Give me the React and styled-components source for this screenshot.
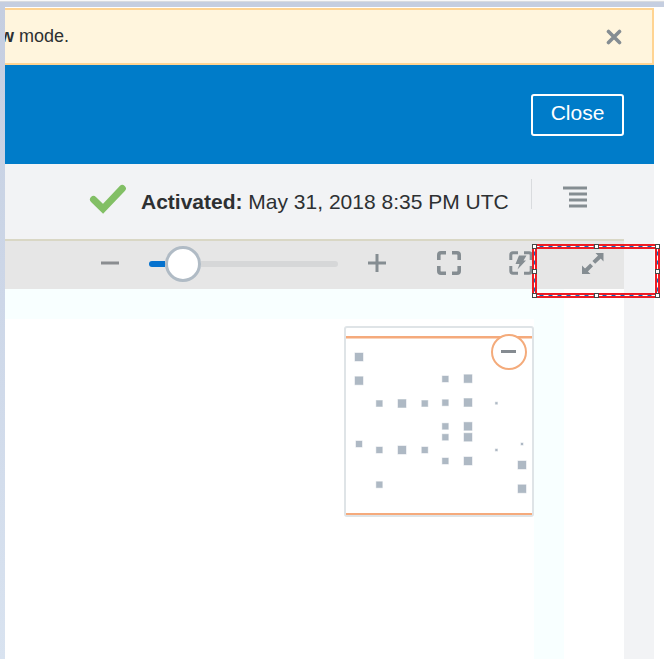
import React from "react";
import styled, { createGlobalStyle } from "styled-components";

const GlobalStyle = createGlobalStyle`
  * { box-sizing: border-box; }
  body {
    margin: 0;
    overflow: hidden;
    background: #fff;
    color: #2d3032;
    font-family: "Liberation Sans", Arial, sans-serif;
  }
`;

const Window = styled.div`
  position: relative;
  display: flex;
  flex-direction: column;
  width: 664px;
  height: 659px;
  overflow: hidden;
`;

const WindowTop = styled.div`
  flex: none;
  height: 7px;
  border-top: 1px solid #f8f8f8;
  background: linear-gradient(#d8dbe0 1px, #c5cee0 1px);
`;

const WindowBody = styled.div`
  display: flex;
  flex: 1;
  min-height: 0;
`;

const WindowEdge = styled.div`
  flex: none;
  width: 5px;
  background: linear-gradient(#c5cee0, #cdd7e8 45%, #d9e3f0);
`;

const Page = styled.main`
  display: flex;
  flex-direction: column;
  width: 649px;
  padding-top: 1px;
  background: #f2f3f5;
  box-shadow: inset 0 1px #fff;
`;

const Notice = styled.div`
  display: flex;
  justify-content: space-between;
  flex: none;
  height: 57px;
  padding: 16px 30px 0 0;
  border: 2px solid #ffd493;
  border-left: 0;
  background: #fff5dd;
  overflow: hidden;
`;

const NoticeText = styled.p`
  margin: 0 0 0 -5px;
  font-size: 18px;
  line-height: 20px;
  white-space: nowrap;
`;

const DismissButton = styled.button`
  display: flex;
  width: 16px;
  height: 16px;
  margin-top: 3px;
  padding: 0;
  border: 0;
  background: none;
`;

const Header = styled.header`
  display: flex;
  justify-content: flex-end;
  flex: none;
  height: 99px;
  padding: 29px 30px 0;
  background: #007cc9;
`;

const CloseButton = styled.button`
  width: 93px;
  height: 42px;
  padding: 0 0 4px;
  border: 2px solid #fff;
  border-radius: 3px;
  background: transparent;
  color: #fff;
  font: 21px/34px "Liberation Sans", Arial, sans-serif;
`;

const StatusBar = styled.section`
  display: flex;
  flex: none;
  height: 75px;
  padding-left: 84px;
`;

const Check = styled.svg`
  flex: none;
  width: 38px;
  height: 32px;
  margin-top: 19px;
`;

const StatusText = styled.p`
  width: 390px;
  margin: 26px 0 0 14px;
  font-size: 21px;
  line-height: 24px;
  white-space: nowrap;
`;

const MenuArea = styled.div`
  height: 30px;
  margin-top: 15px;
  padding: 7px 0 0 31px;
  border-left: 1px solid #d9dbde;
`;

const Toolbar = styled.nav`
  display: flex;
  flex: none;
  width: 619px;
  height: 50px;
  padding-left: 96px;
  border-top: 2px solid #d9d7c5;
  background: #e6e6e6;
`;

const Tool = styled.button`
  display: flex;
  flex: none;
  width: ${(p) => p.$size}px;
  height: ${(p) => p.$size}px;
  margin: ${(p) => p.$top}px 0 0 ${(p) => p.$gap || 0}px;
  padding: 0;
  border: 0;
  background: none;
`;

const Slider = styled.div`
  display: flex;
  align-items: center;
  flex: none;
  width: 189px;
  height: 36px;
  margin: 5px 0 0 30px;
`;

const SliderTrack = styled.div`
  width: ${(p) => (p.$filled ? "16px" : "137px")};
  height: 6px;
  border-radius: ${(p) => (p.$filled ? "3px 0 0 3px" : "0 3px 3px 0")};
  background: ${(p) => (p.$filled ? "#0572ce" : "#d6d7d8")};
`;

const SliderThumb = styled.div`
  width: 36px;
  height: 36px;
  border: 3px solid #b0bbc5;
  border-radius: 50%;
  background: #fff;
`;

const Canvas = styled.section`
  flex: 1;
  width: 619px;
  padding: 37px 0 0 339px;
  background:
    linear-gradient(#f8ffff, #f8ffff) 529px 0 / 30px 100% no-repeat,
    linear-gradient(#f8ffff, #f8ffff) 0 0 / 559px 30px no-repeat,
    #fff;
`;

const MiniMap = styled.div`
  position: relative;
  width: 190px;
  height: 191px;
  border: 2px solid #dfe4e7;
  border-radius: 3px;
  background: #fff;
`;

const MapDrawing = styled.svg`
  display: block;
  width: 186px;
  height: 187px;
`;

const CollapseButton = styled.button`
  position: absolute;
  top: 6px;
  right: 5px;
  display: grid;
  place-items: center;
  width: 36px;
  height: 36px;
  padding: 0 1px 1px 0;
  border: 2px solid #f4ab7b;
  border-radius: 50%;
  background: #fff;
`;

const MinusMark = styled.span`
  width: 15px;
  height: 3px;
  background: #858b91;
`;

const Highlight = styled.svg`
  position: absolute;
  left: 532px;
  top: 244px;
  width: 128px;
  height: 54px;
  pointer-events: none;
`;

/* Each node is its left, top and size inside the overview. */
const nodes = [
  [9, 25, 8], [9, 48.7, 8], [30.3, 72.5, 6], [52, 71.5, 8], [75.8, 72.5, 6],
  [96.3, 48, 6], [118, 46.7, 8], [96.3, 71.7, 6], [118, 70.5, 8], [149.4, 74.2, 2],
  [96.3, 95.3, 6], [118, 94.3, 8], [96.3, 106.2, 6], [118, 105.2, 8],
  [10, 113, 6], [30.3, 119, 6], [52, 118, 8], [75.8, 119, 6], [149.4, 121, 2],
  [175, 115, 2], [96.3, 130, 6], [118, 129, 8], [172, 133, 8], [30.3, 153.7, 6],
  [172, 156.8, 8],
];

const handles = [
  [0, 0], [62, 0], [123, 0], [0, 25], [123, 25], [0, 49], [62, 49], [123, 49],
];

const CORNERS = "M1.8 9V4Q1.8 1.8 4 1.8H9M15 1.8H20Q22.2 1.8 22.2 4V9M22.2 15V20Q22.2 22.2 20 22.2H15M9 22.2H4Q1.8 22.2 1.8 20V15";

function CornerFrame({ width = 3 }) {
  return <path d={CORNERS} fill="none" stroke="#858d92" strokeWidth={width} />;
}

function Overview() {
  return (
    <MiniMap>
      <MapDrawing viewBox="0 0 186 187">
        <path d="M0 9H186M0 186H186" stroke="#f5aa7c" strokeWidth="2" />
        <path d="M0 10.5H186" stroke="#f9d4bd" />
        {nodes.map(([x, y, s]) => (
          <rect key={`${x}-${y}`} x={x} y={y} width={s} height={s}
            fill="#aeb9c4" stroke="#aeb9c4" strokeOpacity=".45" strokeWidth="1" />
        ))}
      </MapDrawing>
      <CollapseButton aria-label="Collapse overview"><MinusMark /></CollapseButton>
    </MiniMap>
  );
}

export default function App() {
  return (
    <>
      <GlobalStyle />
      <Window>
        <WindowTop />
        <WindowBody>
          <WindowEdge />
          <Page>
            <Notice>
              <NoticeText><b>w</b> mode.</NoticeText>
              <DismissButton aria-label="Dismiss">
                <svg width="16" height="16" viewBox="0 0 16 16">
                  <path d="M2.5 2.5L13.5 13.5M13.5 2.5L2.5 13.5" stroke="#858d92" strokeWidth="3.6" strokeLinecap="round" />
                </svg>
              </DismissButton>
            </Notice>
            <Header><CloseButton>Close</CloseButton></Header>
            <StatusBar>
              <Check viewBox="0 0 38 32">
                <path d="M4.5 16.5L14 25.8L33.3 5.5" fill="none" stroke="#82bf65" strokeWidth="7" strokeLinecap="round" />
              </Check>
              <StatusText><b>Activated:</b> May 31, 2018 8:35 PM UTC</StatusText>
              <MenuArea>
                <svg width="25" height="22" viewBox="0 0 25 22">
                  <path d="M0 2H24M6 8H24M6 14H24M6 20H24" stroke="#858d92" strokeWidth="2.8" />
                </svg>
              </MenuArea>
            </StatusBar>
            <Toolbar>
              <Tool $size={18} $top={13} aria-label="Zoom out">
                <svg width="18" height="18"><path d="M0 9H18" stroke="#8a8d90" strokeWidth="3" /></svg>
              </Tool>
              <Slider>
                <SliderTrack $filled />
                <SliderThumb />
                <SliderTrack />
              </Slider>
              <Tool $size={18} $top={13} $gap={30} aria-label="Zoom in">
                <svg width="18" height="18"><path d="M0 9H18M9 0V18" stroke="#858d92" strokeWidth="3" /></svg>
              </Tool>
              <Tool $size={24} $top={10} $gap={51} aria-label="Fit view">
                <svg width="24" height="24"><CornerFrame width={3.6} /></svg>
              </Tool>
              <Tool $size={24} $top={10} $gap={48} aria-label="Auto fit">
                <svg width="24" height="24">
                  <CornerFrame width={3} />
                  <path d="M10 4.5H17.5L14.5 9.5H17L8.5 18.5L10.5 13H6.5Z" fill="#858d92" />
                </svg>
              </Tool>
              <Tool $size={22} $top={12} $gap={49} aria-label="Expand">
                <svg width="22" height="22" viewBox="0 0 22 22">
                  <path d="M11.8 9.4L18 3.5M9.6 11.8L4 17.5" stroke="#858d92" strokeWidth="4" />
                  <path d="M13.5 0H21.5V8.5ZM0 12.5L8.5 21H0Z" fill="#858d92" />
                </svg>
              </Tool>
            </Toolbar>
            <Canvas><Overview /></Canvas>
          </Page>
        </WindowBody>
        <Highlight viewBox="0 0 128 54">
          <rect x="2.5" y="2.5" width="123" height="49" fill="none" stroke="#ed1c24" strokeWidth="5" />
          <path d="M2.5 2.5H125.5M2.5 51.5H125.5M2.5 2.5V51.5M125.5 2.5V51.5" stroke="#086fc4" />
          <path d="M2.5 2.5H125.5M2.5 51.5H125.5M2.5 2.5V51.5M125.5 2.5V51.5" stroke="#fff" strokeDasharray="5 4" />
          {handles.map(([x, y]) => (
            <rect key={`${x}-${y}`} x={x + 0.5} y={y + 0.5} width="4" height="4" fill="#fff" stroke="#474747" />
          ))}
        </Highlight>
      </Window>
    </>
  );
}
